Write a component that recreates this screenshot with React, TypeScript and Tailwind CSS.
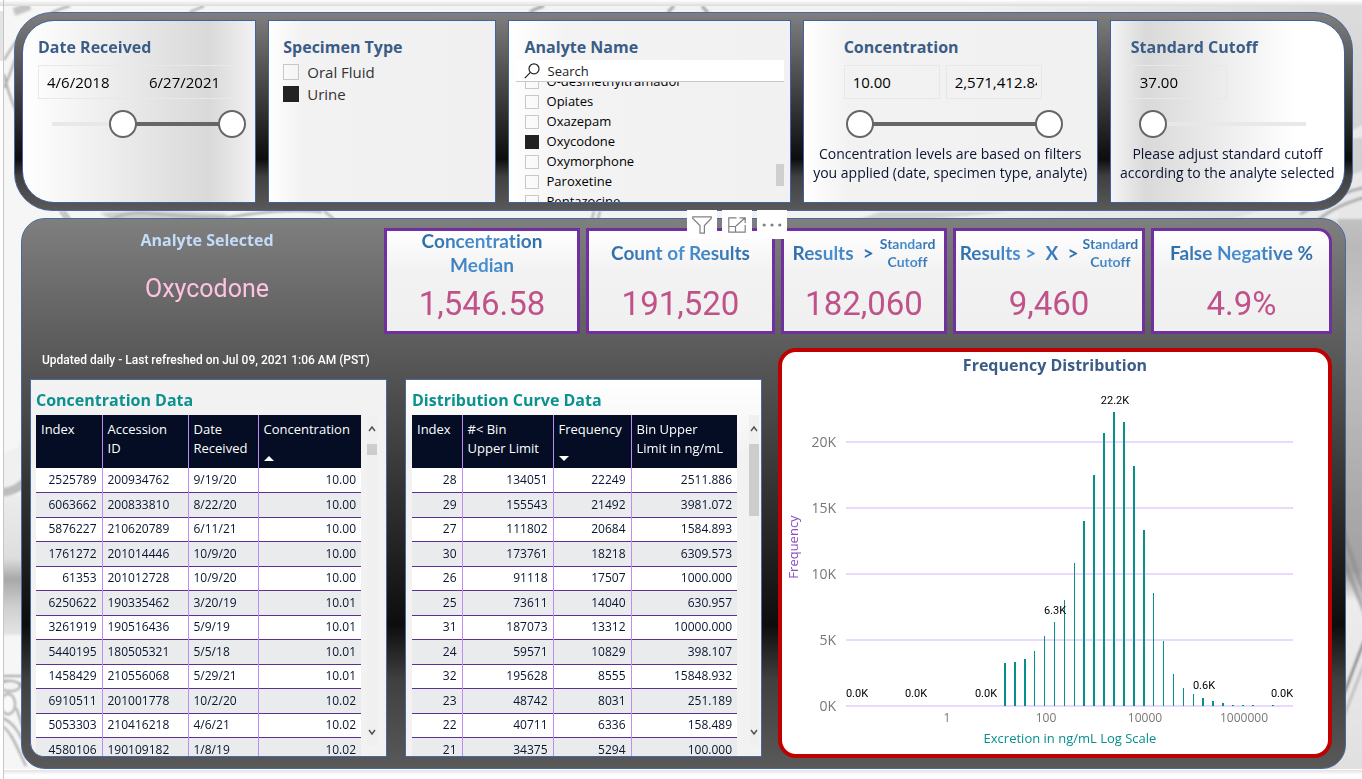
import React, { useState } from "react";

const SANS = "font-['Open_Sans','Noto_Sans',sans-serif]";
const DIN = "font-[Roboto,sans-serif]";
const HUMANIST = "font-[Lato,sans-serif]";

/* ---------- Page background ---------- */

function Backdrop() {
  return (
    <svg aria-hidden="true" className="absolute inset-0 h-full w-full" viewBox="0 0 1362 779" preserveAspectRatio="none">
      <defs>
        <linearGradient id="base" x1="0" x2="1" y1="0" y2="0">
          <stop offset="0" stopColor="#f6f6f6" />
          <stop offset="0.7" stopColor="#f1f1f1" />
          <stop offset="1" stopColor="#dadada" />
        </linearGradient>
        <linearGradient id="rightShade" x1="0" x2="0" y1="0" y2="1">
          <stop offset="0" stopColor="#dcdcdc" />
          <stop offset="0.22" stopColor="#d0d0d0" />
          <stop offset="0.32" stopColor="#b9b9b9" />
          <stop offset="0.42" stopColor="#c6c6c6" />
          <stop offset="0.66" stopColor="#a9a9a9" />
          <stop offset="0.74" stopColor="#a2a2a2" />
          <stop offset="0.78" stopColor="#ececec" />
          <stop offset="1" stopColor="#e0e0e0" />
        </linearGradient>
        <linearGradient id="leftShade" x1="0" x2="0" y1="0" y2="1">
          <stop offset="0" stopColor="#ececec" />
          <stop offset="0.45" stopColor="#dedede" />
          <stop offset="0.6" stopColor="#a8a8a8" />
          <stop offset="0.8" stopColor="#cfcfcf" />
          <stop offset="1" stopColor="#e4e4e4" />
        </linearGradient>
        <linearGradient id="topFade" x1="0" x2="0" y1="0" y2="1">
          <stop offset="0" stopColor="#ffffff" />
          <stop offset="1" stopColor="#dcdcdc" />
        </linearGradient>
        <linearGradient id="bottomFade" x1="0" x2="0" y1="0" y2="1">
          <stop offset="0" stopColor="#e2e2e2" />
          <stop offset="1" stopColor="#ffffff" />
        </linearGradient>
        <filter id="soft" x="-5%" y="-5%" width="110%" height="110%">
          <feGaussianBlur stdDeviation="1" />
        </filter>
      </defs>
      <rect width="1362" height="779" fill="#ffffff" />
      <rect x="4" y="6" width="1358" height="764" fill="url(#base)" />
      <g filter="url(#soft)">
        <rect x="1338" y="0" width="34" height="770" fill="url(#rightShade)" />
        <path d="M1372 120 L1330 142 L1372 136Z M1372 168 C1330 180 1300 200 1230 219 L1372 219Z" fill="#f0f0f0" opacity="0.8" />
        <path d="M1370 186 C1340 192 1320 204 1300 214 M1370 196 C1346 202 1330 210 1318 220" stroke="#adadad" strokeWidth="3" fill="none" />
        <path d="M1342 528 L1366 600 M1342 556 L1366 615" stroke="#8e8e8e" strokeWidth="5" opacity="0.6" />
        <path d="M1344 694 L1364 641" stroke="#8f8f8f" strokeWidth="3" />
        <path d="M1344 716 L1364 664" stroke="#c2c2c2" strokeWidth="3" />
        <rect x="0" y="495" width="26" height="140" fill="url(#leftShade)" />
        <path d="M0 462 C14 462 20 455 26 445 V488 C16 494 10 496 0 497Z" fill="#bdbdbd" />
        <path d="M0 452 C14 452 20 446 26 436 V474 C18 484 10 488 0 488Z" fill="#f0f0f0" />
        <g fill="none" stroke="#a6a6a6" strokeWidth="2">
          <path d="M0 676 H24 M0 681 C12 680 18 682 24 686" />
          <ellipse cx="10" cy="686" rx="10" ry="5" fill="#f4f4f4" />
          <ellipse cx="8" cy="704" rx="7" ry="10" fill="#fafafa" />
          <path d="M2 718 C14 722 20 734 28 752 M16 708 C22 720 24 740 36 764 M2 726 C12 732 18 750 26 766" />
          <path d="M4 74 C8 96 16 110 20 120 M4 88 C12 70 14 60 20 50 M4 60 C10 50 14 44 20 36" />
          <path d="M14 12 C20 10 24 8 30 6" strokeWidth="8" stroke="#c4c4c4" />
          <path d="M50 14 C56 10 62 8 70 6" />
          <path d="M530 12 C534 9 538 8 544 6 M668 12 L674 6 M702 6 L708 13" strokeWidth="3" />
          <path d="M190 12 C196 9 200 8 204 6 M60 211 L66 219 M64 211 L70 219" />
          <path d="M112 219 C122 214 132 212 146 213 C170 215 200 219 230 217 C262 212 290 209 322 212 M592 219 L594 211 M598 219 L600 211 M334 219 L324 211" />
        </g>
        <path d="M100 213 C150 209 190 212 230 214 L210 219 H110Z" fill="#b4b4b4" opacity="0.6" />
        <path d="M880 212 H1010 L930 219 H860Z" fill="#d4d4d4" />
      </g>
      <rect x="0" y="0" width="4" height="779" fill="#ffffff" />
      <rect x="0" y="769" width="1362" height="10" fill="#ffffff" />
      <rect x="0" y="0" width="1362" height="6" fill="url(#topFade)" />
      <rect x="4" y="770" width="1358" height="5" fill="url(#bottomFade)" />
      <rect x="0" y="11" width="3" height="50" fill="#e4e4e4" />
      <rect x="3" y="0" width="1" height="779" fill="#c6c6c6" />
    </svg>
  );
}

/* ---------- Slicer controls ---------- */

const THUMB =
  "pointer-events-none absolute inset-0 m-0 h-7 w-full appearance-none bg-transparent outline-none " +
  "[&::-webkit-slider-thumb]:pointer-events-auto [&::-webkit-slider-thumb]:box-border [&::-webkit-slider-thumb]:h-7 [&::-webkit-slider-thumb]:w-7 " +
  "[&::-webkit-slider-thumb]:cursor-pointer [&::-webkit-slider-thumb]:appearance-none [&::-webkit-slider-thumb]:rounded-full " +
  "[&::-webkit-slider-thumb]:border-2 [&::-webkit-slider-thumb]:border-solid [&::-webkit-slider-thumb]:border-[#666666] [&::-webkit-slider-thumb]:bg-white";

function RangeSlider({ label, start, end }: { label: string; start: number; end?: number }) {
  const [lo, setLo] = useState(start);
  const [hi, setHi] = useState(end ?? start);
  const double = end !== undefined;
  return (
    <div className="relative h-7">
      <div className="flex h-full items-center px-3.5">
        <div className="h-1 w-full bg-[#e8e8e8]">
          {double && (
            <div className="h-1 bg-[#666666]" style={{ marginLeft: `${lo / 10}%`, width: `${(hi - lo) / 10}%` }} />
          )}
        </div>
      </div>
      <input
        type="range"
        aria-label={double ? `${label} minimum` : label}
        min={0}
        max={1000}
        value={lo}
        onChange={(e) => setLo(double ? Math.min(Number(e.target.value), hi) : Number(e.target.value))}
        className={THUMB}
      />
      {double && (
        <input
          type="range"
          aria-label={`${label} maximum`}
          min={0}
          max={1000}
          value={hi}
          onChange={(e) => setHi(Math.max(Number(e.target.value), lo))}
          className={THUMB}
        />
      )}
    </div>
  );
}

function ValueBox({ label, value }: { label: string; value: string }) {
  return (
    <input
      type="text"
      aria-label={label}
      defaultValue={value}
      className="h-[34px] w-24 border border-[#e8e8e8] bg-transparent pr-1 pl-2 text-[15px] text-black outline-none"
    />
  );
}

function SlicerTitle({ children }: { children: React.ReactNode }) {
  return <h2 className="text-base leading-6 font-bold text-[#3a5c86]">{children}</h2>;
}

function Tick({ label, checked, large }: { label: string; checked?: boolean; large?: boolean }) {
  return (
    <label
      className={
        large
          ? "flex h-[22px] items-center gap-2 text-[15px] text-[#333333]"
          : "flex h-5 shrink-0 items-center gap-2 text-[13px] text-black"
      }
    >
      <input
        type="checkbox"
        defaultChecked={checked}
        className={
          large
            ? "h-4 w-4 shrink-0 appearance-none border border-[#c8c8c8] checked:border-[#222222] checked:bg-[#222222]"
            : "h-3.5 w-3.5 shrink-0 appearance-none border border-[#c8c8c8] checked:border-[#222222] checked:bg-[#222222]"
        }
      />
      <span>{label}</span>
    </label>
  );
}

const ANALYTES = ["O-desmethyltramadol", "Opiates", "Oxazepam", "Oxycodone", "Oxymorphone", "Paroxetine", "Pentazocine"];

function SlicerBar() {
  return (
    <section className="relative mt-3 mr-[9px] ml-3.5 grid h-[199px] grid-cols-[235fr_228fr_284fr_296fr_236fr] gap-3 rounded-[38px] border border-[#4a68a0] bg-[linear-gradient(180deg,#7f7f7f_0%,#0d0d0d_74%,#404040_83%,#595959_100%)] px-[7px] py-[7px]">
      <div className="rounded-l-[32px] border border-[#3f62a5] bg-[linear-gradient(90deg,#ffffff_0%,#d9d9d9_80%,#f2f2f2_100%)] px-[15px] pt-3.5">
        <SlicerTitle>Date Received</SlicerTitle>
        <div className="mt-1.5 flex gap-1.5">
          <ValueBox label="Start date" value="4/6/2018" />
          <ValueBox label="End date" value="6/27/2021" />
        </div>
        <div className="mt-[11px] -mr-1.5">
          <RangeSlider label="Date received" start={394} end={1000} />
        </div>
      </div>

      <div className="border border-[#3f62a5] bg-[linear-gradient(90deg,#ffffff_0%,#f2f2f2_15%,#f0f0f0_100%)] px-3.5 pt-3.5">
        <SlicerTitle>Specimen Type</SlicerTitle>
        <div className="mt-0.5">
          <Tick large label="Oral Fluid" />
          <Tick large label="Urine" checked />
        </div>
      </div>

      <div className="flex min-h-0 flex-col border border-[#3f62a5] bg-[linear-gradient(90deg,#ffffff_0%,#f3f3f3_20%,#f1f1f1_100%)] pt-3.5 pr-1.5 pl-[7px]">
        <div className="px-[9px]">
          <SlicerTitle>Analyte Name</SlicerTitle>
        </div>
        <div className="mt-px flex h-[22px] shrink-0 items-center gap-2 border-b border-[#c8c8c8] bg-white px-2">
          <svg aria-hidden="true" className="h-4 w-4" viewBox="0 0 16 16" fill="none" stroke="#222222" strokeWidth="1.2">
            <circle cx="10" cy="5.8" r="5" />
            <path d="M6.4 9.4 L0.8 15.2" />
          </svg>
          <input
            type="text"
            aria-label="Search analytes"
            placeholder="Search"
            className="min-w-0 flex-1 bg-transparent text-[13px] leading-5 outline-none placeholder:text-[#222222]"
          />
        </div>
        <div className="flex min-h-0 flex-1">
          <div className="flex min-h-0 flex-1 flex-col justify-center overflow-hidden pl-[9px]">
            {ANALYTES.map((name) => (
              <Tick key={name} label={name} checked={name === "Oxycodone"} />
            ))}
          </div>
          <div className="flex w-2 flex-col justify-end pb-4">
            <div className="h-[22px] bg-[#cfcfcf]" />
          </div>
        </div>
      </div>

      <div className="border border-[#3f62a5] bg-[linear-gradient(90deg,#ffffff_0%,#f2f2f2_15%,#f1f1f1_100%)] pt-3.5">
        <div className="px-10">
          <SlicerTitle>Concentration</SlicerTitle>
          <div className="mt-1.5 flex gap-1.5">
            <ValueBox label="Minimum concentration" value="10.00" />
            <ValueBox label="Maximum concentration" value="2,571,412.84" />
          </div>
          <div className="mt-[11px] -mr-1.5 ml-0.5">
            <RangeSlider label="Concentration" start={0} end={1000} />
          </div>
        </div>
        <p className="mt-1.5 text-center text-sm leading-[19px] whitespace-nowrap text-[#0a1430]">
          Concentration levels are based on filters
          <br />
          you applied (date, specimen type, analyte)
        </p>
      </div>

      <div className="rounded-r-[32px] border border-[#3f62a5] bg-[linear-gradient(90deg,#f4f4f4_0%,#d9d9d9_15%,#ffffff_80%)] pt-3.5">
        <div className="px-5">
          <SlicerTitle>Standard Cutoff</SlicerTitle>
          <div className="mt-1.5">
            <ValueBox label="Standard cutoff value" value="37.00" />
          </div>
          <div className="mt-[11px] mr-1 ml-2">
            <RangeSlider label="Standard cutoff" start={0} />
          </div>
        </div>
        <p className="mt-1.5 text-center text-sm leading-[19px] whitespace-nowrap text-[#0a1430]">
          Please adjust standard cutoff
          <br />
          according to the analyte selected
        </p>
      </div>
    </section>
  );
}

/* ---------- KPI cards ---------- */

const BLUE_TEXT = "bg-[linear-gradient(90deg,#2e6da8_0%,#4a90d2_50%,#2e6da8_100%)] bg-clip-text text-transparent";

function Kpi({ title, value, rounded }: { title: React.ReactNode; value: string; rounded?: boolean }) {
  return (
    <div
      className={
        rounded
          ? "rounded-tr-[14px] border-[3px] border-[#7030a0] bg-[linear-gradient(180deg,#ffffff_0%,#f2f2f2_40%,#f0f0f0_100%)]"
          : "border-[3px] border-[#7030a0] bg-[linear-gradient(180deg,#ffffff_0%,#f2f2f2_40%,#f0f0f0_100%)]"
      }
    >
      <h3
        className={`${HUMANIST} flex h-11 items-center justify-center text-center text-[19px] leading-6 font-bold whitespace-nowrap [font-variant-ligatures:none]`}
      >
        {title}
      </h3>
      <p className={`${DIN} flex h-14 items-center justify-center text-[33px] leading-none text-[#c0528a]`}>{value}</p>
    </div>
  );
}

function CutoffStack() {
  return (
    <span className={`${BLUE_TEXT} text-sm leading-[18px]`}>
      Standard
      <br />
      Cutoff
    </span>
  );
}

function KpiRow() {
  return (
    <div className="grid h-[106px] flex-1 grid-cols-[196fr_189fr_166fr_192fr_181fr] gap-1.5">
      <Kpi
        title={
          <span className={BLUE_TEXT}>
            Concentration
            <br />
            Median
          </span>
        }
        value="1,546.58"
      />
      <Kpi title={<span className={BLUE_TEXT}>Count of Results</span>} value="191,520" />
      <Kpi
        title={
          <span className="flex items-center gap-1.5">
            <span className={BLUE_TEXT}>Results&nbsp; &gt;</span>
            <CutoffStack />
          </span>
        }
        value="182,060"
      />
      <Kpi
        title={
          <span className="flex items-center gap-1">
            <span className={BLUE_TEXT}>Results &gt;&nbsp; X&nbsp; &gt;</span>
            <CutoffStack />
          </span>
        }
        value="9,460"
      />
      <Kpi rounded title={<span className={BLUE_TEXT}>False Negative %</span>} value="4.9%" />
    </div>
  );
}

/* ---------- Tables ---------- */

type Column = { label: React.ReactNode; width: string; align: string; sort?: "asc" | "desc" };

function SortArrow({ dir }: { dir: "asc" | "desc" }) {
  return (
    <svg aria-hidden="true" className="mt-auto h-[5px] w-2.5" viewBox="0 0 10 5" fill="#ffffff">
      <path d={dir === "asc" ? "M0 5 L5 0 L10 5Z" : "M0 0 L5 5 L10 0Z"} />
    </svg>
  );
}

function DataTable({ label, columns, rows }: { label: string; columns: Column[]; rows: string[][] }) {
  return (
    <table aria-label={label} className="w-full table-fixed border-collapse text-xs text-[#0a1430]">
      <thead className="bg-[#040d24] text-[13px] leading-[19px] text-white">
        <tr>
          {columns.map((c, i) => (
            <th
              key={i}
              scope="col"
              aria-sort={c.sort === "asc" ? "ascending" : c.sort === "desc" ? "descending" : undefined}
              className={`${c.width} h-[53px] border-r border-[#bf8cf5] p-0 text-left align-top font-normal last:border-r-0`}
            >
              <div className="flex h-[53px] flex-col pt-[5px] pb-[7px] pl-[5px] whitespace-nowrap">
                <span>{c.label}</span>
                {c.sort && <SortArrow dir={c.sort} />}
              </div>
            </th>
          ))}
        </tr>
      </thead>
      <tbody>
        {rows.map((r) => (
          <tr key={r[0]} className="h-6 border-b border-[#5b3090] bg-white even:h-[25px] even:bg-[#e9ebed]">
            {r.map((cell, i) => (
              <td key={i} className={`${columns[i].align} border-r border-[#bf8cf5] px-[5px] py-0 leading-5 last:border-r-0`}>
                {cell}
              </td>
            ))}
          </tr>
        ))}
      </tbody>
    </table>
  );
}

function Scrollbar({ thumb }: { thumb: string }) {
  return (
    <div className="mb-2.5 flex w-2.5 shrink-0 flex-col items-center bg-[#f0f0f0] py-2.5">
      <svg aria-hidden="true" className="h-2 w-2 shrink-0" viewBox="0 0 8 8" fill="none" stroke="#505050" strokeWidth="1.4">
        <path d="M1 6 L4 2 L7 6" />
      </svg>
      <div className={`${thumb} mt-[11px] w-full bg-[#cdcdcd]`} />
      <svg aria-hidden="true" className="mt-auto h-2 w-2 shrink-0" viewBox="0 0 8 8" fill="none" stroke="#505050" strokeWidth="1.4">
        <path d="M1 2 L4 6 L7 2" />
      </svg>
    </div>
  );
}

function TableTitle({ children }: { children: React.ReactNode }) {
  return <h2 className="pt-[7px] pb-px text-base leading-[27px] font-bold text-[#0b918e]">{children}</h2>;
}

const CONC_COLUMNS: Column[] = [
  { label: "Index", width: "w-[66px]", align: "text-right" },
  { label: <>Accession<br />ID</>, width: "w-[86px]", align: "text-left" },
  { label: <>Date<br />Received</>, width: "w-[70px]", align: "text-left" },
  { label: "Concentration", width: "w-[103px]", align: "text-right", sort: "asc" },
];

const CONC_ROWS = [
  ["2525789", "200934762", "9/19/20", "10.00"],
  ["6063662", "200833810", "8/22/20", "10.00"],
  ["5876227", "210620789", "6/11/21", "10.00"],
  ["1761272", "201014446", "10/9/20", "10.00"],
  ["61353", "201012728", "10/9/20", "10.00"],
  ["6250622", "190335462", "3/20/19", "10.01"],
  ["3261919", "190516436", "5/9/19", "10.01"],
  ["5440195", "180505321", "5/5/18", "10.01"],
  ["1458429", "210556068", "5/29/21", "10.01"],
  ["6910511", "201001778", "10/2/20", "10.02"],
  ["5053303", "210416218", "4/6/21", "10.02"],
  ["4580106", "190109182", "1/8/19", "10.02"],
];

const DIST_COLUMNS: Column[] = [
  { label: "Index", width: "w-[50px]", align: "text-right" },
  { label: <>#&lt; Bin<br />Upper Limit</>, width: "w-[91px]", align: "text-right" },
  { label: "Frequency", width: "w-[78px]", align: "text-right", sort: "desc" },
  { label: <>Bin Upper<br />Limit in ng/mL</>, width: "w-[106px]", align: "text-right" },
];

const DIST_ROWS = [
  ["28", "134051", "22249", "2511.886"],
  ["29", "155543", "21492", "3981.072"],
  ["27", "111802", "20684", "1584.893"],
  ["30", "173761", "18218", "6309.573"],
  ["26", "91118", "17507", "1000.000"],
  ["25", "73611", "14040", "630.957"],
  ["31", "187073", "13312", "10000.000"],
  ["24", "59571", "10829", "398.107"],
  ["32", "195628", "8555", "15848.932"],
  ["23", "48742", "8031", "251.189"],
  ["22", "40711", "6336", "158.489"],
  ["21", "34375", "5294", "100.000"],
];

/* ---------- Chart ---------- */

const FIRST_BIN = 17;
const BINS = [
  3260, 3330, 3560, 4170, 5294, 6336, 8031, 10829, 14040, 17507, 20684, 22249, 21492, 18218, 13312, 8555, 4920, 2420, 1360,
  910, 600, 380, 230, 80, 70, 80, 0, 70,
];
const BASE = 328;
const yOf = (v: number) => BASE - (v * 66) / 5000;
const xOf = (bin: number) => 262.5 + (bin - 21) * 9.92;

function FrequencyChart() {
  return (
    <svg role="img" aria-label="Frequency by excretion in ng/mL, log scale" className="block w-full" viewBox="0 0 546 376">
      <g className={SANS} fontSize="14" fill="#777777" textAnchor="end">
        {[0, 5, 10, 15, 20].map((k) => (
          <g key={k}>
            <line x1="64" x2="511" y1={yOf(k * 1000)} y2={yOf(k * 1000)} stroke="#e2ccff" strokeWidth="1.3" />
            <text x="54" y={yOf(k * 1000) + 5}>{k}K</text>
          </g>
        ))}
      </g>
      <g fill="#078f8c" shapeRendering="crispEdges">
        {BINS.map((v, i) => (
          <rect key={i} x={xOf(FIRST_BIN + i) - 0.75} y={yOf(v)} width="1.6" height={BASE - yOf(v)} />
        ))}
      </g>
      <g className={SANS} fontSize="12" fill="#777777" textAnchor="middle">
        <text x="165" y="344">1</text>
        <text x="264" y="344">100</text>
        <text x="363" y="344">10000</text>
        <text x="462" y="344">1000000</text>
      </g>
      <g className={DIN} fontSize="11" fill="#000000" textAnchor="middle">
        <text x="333" y="26">22.2K</text>
        <text x="273" y="236">6.3K</text>
        <text x="75" y="319">0.0K</text>
        <text x="134" y="319">0.0K</text>
        <text x="204" y="319">0.0K</text>
        <text x="422" y="311">0.6K</text>
        <text x="500" y="319">0.0K</text>
      </g>
      <text className={SANS} x="288" y="365" fontSize="13" fill="#078f8c" textAnchor="middle">Excretion in ng/mL Log Scale</text>
      <text className={SANS} transform="translate(16 169) rotate(-90)" fontSize="13" fill="#8a4fc0" textAnchor="middle">Frequency</text>
    </svg>
  );
}

/* ---------- Visual toolbar ---------- */

function VisualToolbar() {
  const button = "flex h-[29px] w-[30px] items-center justify-center bg-white text-[#808080]";
  return (
    <div className="absolute -top-[9px] left-1/2 ml-[3px] flex gap-[5px]">
      <button type="button" aria-label="Filters" className={button}>
        <svg className="h-[18px] w-5" viewBox="0 0 20 18" fill="none" stroke="currentColor" strokeWidth="1.2">
          <path d="M0.8 0.8 H19.2 V2.4 L12.4 9.6 V17.2 H8 V9.6 L0.8 2.4Z" />
        </svg>
      </button>
      <button type="button" aria-label="Focus mode" className={button}>
        <svg className="h-4 w-[18px]" viewBox="0 0 18 16" fill="none" stroke="currentColor" strokeWidth="1.2">
          <path d="M8.5 0.8 H0.8 V15.2 H17.2 V8 M0.8 9.5 H7.5 V15.2 M8 9 L16.6 1.2 M11.5 0.8 H17.2 V6" />
        </svg>
      </button>
      <button type="button" aria-label="More options" className={button}>
        <svg className="h-1 w-5" viewBox="0 0 20 4" fill="currentColor">
          <circle cx="2.2" cy="2" r="1.6" />
          <circle cx="10" cy="2" r="1.6" />
          <circle cx="17.8" cy="2" r="1.6" />
        </svg>
      </button>
    </div>
  );
}

/* ---------- Page ---------- */

export default function App() {
  return (
    <main className={`${SANS} relative min-h-screen overflow-hidden bg-white pb-2.5`}>
      <Backdrop />
      <SlicerBar />

      <section className="relative mt-[7px] mr-4 ml-[21px] rounded-[24px] border border-[#4a68a0] bg-[linear-gradient(180deg,#7f7f7f_0%,#0d0d0d_74%,#404040_84%,#595959_100%)] pt-[9px] pr-[13px] pb-2.5 pl-2">
        <div className="flex">
          <div className="w-[354px] shrink-0 text-center">
            <h2 className="text-base leading-6 font-bold text-[#c3dcfa]">Analyte Selected</h2>
            <p className={`${DIN} mt-[21px] text-[25px] leading-8 text-[#ffc2e0]`}>Oxycodone</p>
          </div>
          <KpiRow />
        </div>

        <div className="mt-3.5 grid grid-cols-[732fr_554fr] gap-4">
          <div className="min-w-0">
            <p className={`${DIN} h-[31px] pl-3 text-xs leading-6 font-medium text-white`}>
              Updated daily - Last refreshed on Jul 09, 2021 1:06 AM (PST)
            </p>
            <div className="grid grid-cols-2 gap-[18px]">
              <div className="overflow-hidden rounded-bl-[14px] border border-[#4a68a0] bg-[#f2f2f2] pr-[9px] pl-[5px]">
                <TableTitle>Concentration Data</TableTitle>
                <div className="flex h-[341px] gap-1.5 overflow-hidden">
                  <div className="min-w-0 flex-1">
                    <DataTable label="Concentration data" columns={CONC_COLUMNS} rows={CONC_ROWS} />
                  </div>
                  <Scrollbar thumb="h-[11px]" />
                </div>
              </div>
              <div className="overflow-hidden border border-[#4a68a0] bg-[linear-gradient(180deg,#ffffff_0%,#f2f2f2_20%,#f2f2f2_100%)] pr-0.5 pl-1.5">
                <TableTitle>Distribution Curve Data</TableTitle>
                <div className="flex h-[341px] gap-3 overflow-hidden">
                  <div className="min-w-0 flex-1">
                    <DataTable label="Distribution curve data" columns={DIST_COLUMNS} rows={DIST_ROWS} />
                  </div>
                  <Scrollbar thumb="h-[72px]" />
                </div>
              </div>
            </div>
          </div>

          <div className="rounded-[18px] border-4 border-[#c00000] bg-white">
            <h2 className="text-center text-base leading-[26px] font-bold text-[#3a5c86]">Frequency Distribution</h2>
            <FrequencyChart />
          </div>
        </div>

        <VisualToolbar />
      </section>
    </main>
  );
}
